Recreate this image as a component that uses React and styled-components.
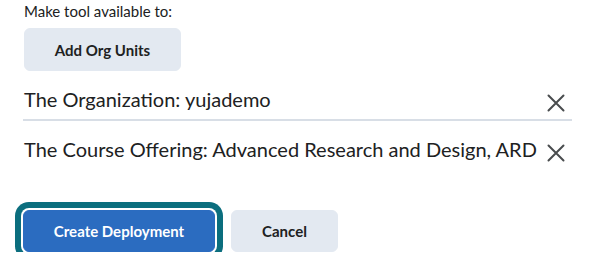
import React from "react";
import styled, { createGlobalStyle } from "styled-components";

const Global = createGlobalStyle`
  html, body { margin: 0; padding: 0; background: #ffffff; }
  body { font-family: Lato, "Noto Sans", sans-serif; color: #202122; }
`;

const Page = styled.div`
  padding: 1px 0 0 23px;
  width: 549px;
`;

const Label = styled.div`
  font-size: 15px;
  line-height: 20px;
  margin-left: 1px;
  margin-bottom: 7px;
`;

const Button = styled.button`
  font-family: Lato, "Noto Sans", sans-serif;
  font-size: 15px;
  font-weight: 700;
  line-height: 20px;
  height: 42px;
  width: ${(p) => p.$w}px;
  padding: 0;
  border: 1px solid ${(p) => (p.$primary ? "#2b6cc0" : "#e3e9f1")};
  border-radius: 6px;
  background: ${(p) => (p.$primary ? "#2b6cc0" : "#e3e9f1")};
  color: ${(p) => (p.$primary ? "#ffffff" : "#202122")};
  cursor: pointer;
  margin-left: ${(p) => p.$ml || 0}px;
  box-shadow: ${(p) =>
    p.$focused ? "0 0 0 2px #ffffff, 0 0 0 8px #0b6e7e" : "none"};
`;

const AddButton = styled(Button)`
  height: 43px;
`;

const List = styled.div`
  display: flex;
  flex-direction: column;
`;

const Row = styled.div`
  display: flex;
  align-items: flex-start;
  justify-content: space-between;
  padding: 14px 0 5px 1px;
  border-bottom: ${(p) => (p.$divider ? "2px solid #d8dee6" : "none")};
`;

const RowText = styled.span`
  font-size: 20px;
  line-height: 28.5px;
  white-space: nowrap;
`;

const Remove = styled.span`
  display: flex;
  width: 18px;
  height: 18px;
  margin: 9px 7px 0 0;
  flex-shrink: 0;
`;

const Actions = styled.div`
  display: flex;
  margin-top: 42px;
`;

const CloseIcon = () => (
  <svg width="18" height="18" viewBox="0 0 18 18" fill="none">
    <path d="M1.5 1.5 L16.5 16.5 M16.5 1.5 L1.5 16.5" stroke="#494c4e" strokeWidth="2" strokeLinecap="round" />
  </svg>
);

const units = [
  "The Organization: yujademo",
  "The Course Offering: Advanced Research and Design, ARD",
];

export default function App() {
  return (
    <>
      <Global />
      <Page>
        <Label>Make tool available to:</Label>
        <AddButton $w={157} $ml={1}>Add Org Units</AddButton>
        <List>
          {units.map((u, i) => (
            <Row key={u} $divider={i === 0}>
              <RowText>{u}</RowText>
              <Remove>
                <CloseIcon />
              </Remove>
            </Row>
          ))}
        </List>
        <Actions>
          <Button $primary $focused $w={192}>Create Deployment</Button>
          <Button $ml={16} $w={107}>Cancel</Button>
        </Actions>
      </Page>
    </>
  );
}
